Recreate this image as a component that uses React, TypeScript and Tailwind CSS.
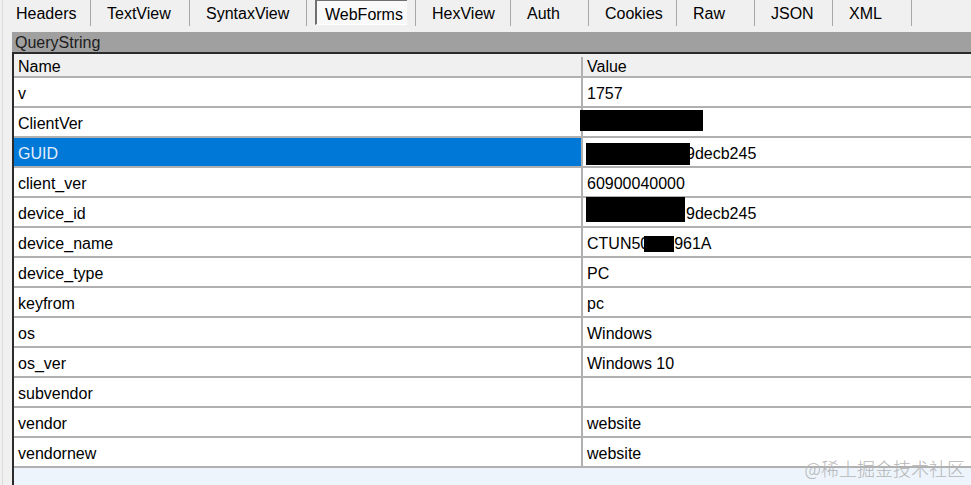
import React from 'react';

const tabs = [
  { label: 'Headers', w: 91 },
  { label: 'TextView', w: 99 },
  { label: 'SyntaxView', w: 117 },
  { label: 'WebForms', w: 109, active: true },
  { label: 'HexView', w: 95 },
  { label: 'Auth', w: 78 },
  { label: 'Cookies', w: 88 },
  { label: 'Raw', w: 78 },
  { label: 'JSON', w: 78 },
  { label: 'XML', w: 79 },
];

type Row = { name: string; value?: React.ReactNode; selected?: boolean; blot?: string };

const rows: Row[] = [
  { name: 'v', value: '1757' },
  { name: 'ClientVer', blot: 'left-[566px] top-[2px] w-[123px] h-[21px]' },
  { name: 'GUID', value: <span className="pl-[99px]">9decb245</span>, selected: true, blot: 'left-[572px] top-[5px] w-[104px] h-[22px]' },
  { name: 'client_ver', value: '60900040000' },
  { name: 'device_id', value: <span className="pl-[99px]">9decb245</span>, blot: 'left-[572px] top-[-1px] w-[99px] h-[25px]' },
  {
    name: 'device_name',
    value: (
      <>
        CTUN50
        <span className="relative z-10 inline-block w-[30px] h-[16px] bg-black -ml-[5px] -mr-[9px]" />
        7961A
      </>
    ),
  },
  { name: 'device_type', value: 'PC' },
  { name: 'keyfrom', value: 'pc' },
  { name: 'os', value: 'Windows' },
  { name: 'os_ver', value: 'Windows 10' },
  { name: 'subvendor', value: '' },
  { name: 'vendor', value: 'website' },
  { name: 'vendornew', value: 'website' },
];

export default function App() {
  return (
    <div className="relative w-[971px] h-[485px] overflow-hidden bg-[#f0f0f0] text-[16px] text-black font-['Liberation_Sans',Arial,sans-serif]">
      {/* faint frame line on the left */}
      <div className="absolute left-[2px] top-0 bottom-0 w-px bg-[#dadada]" />

      {/* Tab strip */}
      <div className="flex h-[32px]">
        {tabs.map((t) => (
          <div key={t.label} style={{ width: t.w }} className="relative h-[26px] shrink-0 border-r border-[#a8a8a8]">
            {t.active ? (
              <div className="absolute left-[8px] top-0 w-[92px] h-[25px] bg-[#f9f9f9] border-l-2 border-t border-[#707070] border-b border-b-white pl-[8px] leading-[27px]">
                {t.label}
              </div>
            ) : (
              <span className="block pl-[16px] leading-[28px]">{t.label}</span>
            )}
          </div>
        ))}
      </div>

      {/* QueryString group header */}
      <div className="ml-[12px] h-[20px] bg-[#a0a0a0] pl-[3px] pt-[1px] leading-[20px] text-[#1c1c1c]">QueryString</div>

      {/* Grid */}
      <div className="ml-[12px] border-l-2 border-t-2 border-[#2b2b2b] bg-white">
        <div className="flex h-[24px] bg-[#f0f0f0] border-b-2 border-[#b0b0b0] pt-[3px] leading-[19px]">
          <div className="w-[569px] shrink-0 border-r-2 border-[#b0b0b0] pl-[4px]">Name</div>
          <div className="flex-1 pl-[4px]">Value</div>
        </div>
        {rows.map((r) => (
          <div key={r.name} className="relative flex h-[30px] border-b-2 border-[#b0b0b0] leading-[25px]">
            <div
              className={
                r.selected
                  ? 'w-[569px] shrink-0 border-r-2 border-[#b0b0b0] bg-[#0078d7] pl-[4px] pt-[3px] text-[#e3eefa]'
                  : 'w-[569px] shrink-0 border-r-2 border-[#b0b0b0] pl-[4px] pt-[3px]'
              }
            >
              {r.name}
            </div>
            <div className="flex flex-1 items-center pl-[4px] pt-[3px] whitespace-pre">{r.value}</div>
            {r.blot && <div className={`absolute z-10 bg-black ${r.blot}`} />}
          </div>
        ))}
        <div className="h-[20px] bg-[#edf4fc]" />
      </div>

      {/* watermark */}
      <div className="absolute right-[6px] bottom-[6px] text-[18px] leading-[22px] text-[#b4b4b4] font-['Noto_Sans_CJK_SC',sans-serif] font-light">
        @稀土掘金技术社区
      </div>
    </div>
  );
}
